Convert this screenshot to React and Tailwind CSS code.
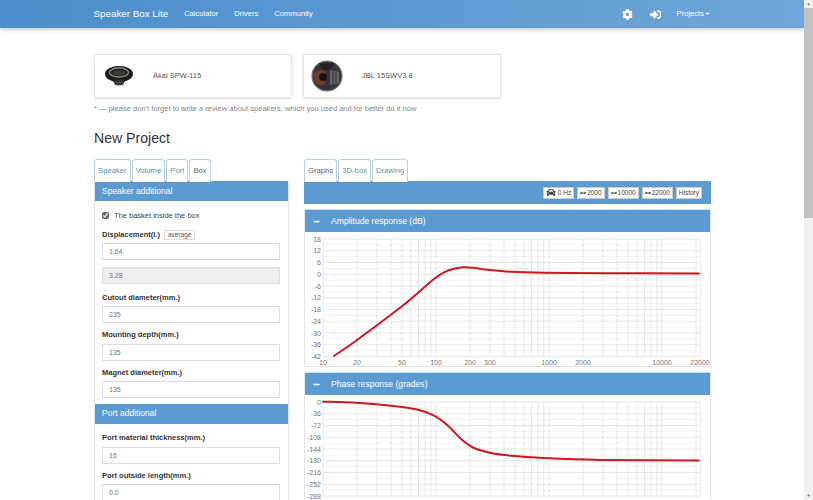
import React from 'react';
import {FaCog, FaSignInAlt, FaCar, FaArrowsAltH, FaMinus, FaCaretDown} from 'react-icons/fa';

const freqs = []
for (let d = 10; d <= 10000; d *= 10) {
    for (let m = 1; m < 10; m++) {
        if (d * m <= 22000) freqs.push(d * m)
    }
}
freqs.push(22000)

const xOf = (f) => 322 + (Math.log10(f) - 1) * 113

// catmull-rom through the picked points, good enough for a response curve
const smooth = (pts) => {
    let d = `M${pts[0][0]} ${pts[0][1]}`
    for (let i = 0; i < pts.length - 1; i++) {
        const p0 = pts[i - 1] || pts[i]
        const p1 = pts[i]
        const p2 = pts[i + 1]
        const p3 = pts[i + 2] || p2
        d += ` C${p1[0] + (p2[0] - p0[0]) / 6} ${p1[1] + (p2[1] - p0[1]) / 6} ${p2[0] - (p3[0] - p1[0]) / 6} ${p2[1] - (p3[1] - p1[1]) / 6} ${p2[0]} ${p2[1]}`
    }
    return d
}

const ampCurve = [[333, 357], [355, 341.7], [400, 308], [433, 280], [447, 271.5], [460, 268.5], [472, 268.8], [487, 270.8], [510, 272.8], [543, 273.8], [600, 274.2], [698, 274.4]]
const phaseCurve = [[322, 402.7], [355, 403.7], [390, 406.7], [417, 410.7], [433, 416.7], [447, 426.7], [460, 440], [473, 449], [490, 454], [510, 456.7], [543, 459], [600, 460.9], [698, 461.6]]

const Chart = ({top, height, first, step, count, curve, xLabels}) => {
    const rows = []
    for (let i = 0; i < count * 2 - 1; i++) rows.push(top + i * 5.875)
    return (
        <svg className="block w-[407px]" style={{height}} viewBox={`304 ${top - 7} 407 ${height}`}>
            {rows.map((y, i) => (
                <line key={y} x1="322" x2="699" y1={y} y2={y} stroke={i % 2 ? "#f2f2f2" : "#e6e6e6"} strokeWidth="1"/>
            ))}
            {freqs.map(f => (
                <line key={f} x1={xOf(f)} x2={xOf(f)} y1={top} y2={top + (count - 1) * 11.75} stroke="#e0e0e0" strokeWidth="0.8"/>
            ))}
            {Array.from({length: count}).map((_, i) => (
                <text key={i} x="320" y={top + i * 11.75 + 2.5} textAnchor="end" fontSize="7" fill="#777">{first + i * step}</text>
            ))}
            {xLabels.map(f => (
                <text key={f} x={f === 22000 ? 699 : xOf(f)} y={top + (count - 1) * 11.75 + 8.5} textAnchor="middle" fontSize="7" fill="#777">{f}</text>
            ))}
            <path d={smooth(curve)} fill="none" stroke="#d0161f" strokeWidth="2" strokeLinecap="round"/>
        </svg>
    )
}

const Tab = ({children, active}) => (
    <div className={`h-[23px] -mb-px flex items-center px-[3px] border border-[#b9d3e4] border-b-0 rounded-t-[3px] bg-white text-[7.7px] ${active ? "text-[#666]" : "text-[#5a94ac]"}`}>
        {children}
    </div>
)

const Field = ({label, value}) => (
    <div className="mb-[5.5px]">
        <div className="flex items-center h-[13px] mb-[2px] text-[7.5px] font-bold text-[#333]">
            {label}
        </div>
        <input readOnly value={value} className="block w-[178px] h-[17px] px-[6px] border border-[#ddd] text-[7px] text-[#777] outline-none"/>
    </div>
)

const Heading = ({children}) => (
    <div className="h-[20px] flex items-center px-[7px] bg-[#5b9bd1] text-white text-[8.5px]">{children}</div>
)

const ChartHeading = ({children}) => (
    <div className="h-[23px] flex items-center px-[8px] bg-[#5b9bd1] text-white text-[8.6px] border-t border-[#c9dff0]">
        <FaMinus className="w-[7px] h-[7px] mr-[11px]"/>
        {children}
    </div>
)

const Btn = ({children}) => (
    <div className="h-[12px] flex items-center gap-[1px] px-[2px] bg-white border border-[#ccc] text-[6.5px] text-[#444]">{children}</div>
)

const SpeakerOne = () => (
    <svg className="w-[30px] h-[24px]" viewBox="0 0 30 24">
        <ellipse cx="15" cy="10" rx="14" ry="8" fill="#1c1c1c"/>
        <ellipse cx="15" cy="8.5" rx="9.5" ry="4.5" fill="none" stroke="#8c8c84" strokeWidth="1.4"/>
        <ellipse cx="15" cy="9" rx="6.5" ry="2.8" fill="#3a3a38"/>
        <path d="M6 15 Q15 24 24 15 Z" fill="#222"/>
        <ellipse cx="15" cy="19" rx="5" ry="2.5" fill="#3d3d3d"/>
    </svg>
)

const SpeakerTwo = () => (
    <svg className="w-[32px] h-[32px]" viewBox="0 0 32 32">
        <circle cx="16" cy="16" r="15" fill="#34343a"/>
        <circle cx="16" cy="16" r="15" fill="none" stroke="#77777d" strokeWidth="1.2"/>
        <path d="M2 13 Q8 8 15 11 L14 24 Q8 28 3 21 Z" fill="#6e3b30"/>
        <circle cx="12" cy="17" r="4" fill="#151518"/>
        <path d="M8 3 L24 3 L18 10 L12 10 Z" fill="#222226"/>
        <path d="M19 10 L28 12 L28 23 L19 25 Z" fill="#66666b"/>
        <path d="M22 11 V24 M25 12 V23" stroke="#2b2a2d" strokeWidth="1"/>
    </svg>
)

const App = () => {
    return (
        <div className="flex h-[500px] overflow-hidden bg-white" style={{fontFamily: '"Liberation Sans", Arial, sans-serif'}}>
            <div className="w-[804px] shrink-0 overflow-hidden">
                <nav className="h-[28px] flex items-center pl-[93.5px] pr-[93px] text-white text-[7.6px] bg-gradient-to-r from-[#4a8ecb] to-[#6fa6d9] shadow-[0_2px_4px_rgba(0,0,0,0.2)]">
                    <span className="text-[9.8px] mr-[16px]">Speaker Box Lite</span>
                    <span className="mr-[16px]">Calculator</span>
                    <span className="mr-[16px]">Drivers</span>
                    <span>Community</span>
                    <FaCog className="ml-auto w-[11px] h-[11px] mr-[17px]"/>
                    <FaSignInAlt className="w-[11px] h-[11px] mr-[16px]"/>
                    <span className="flex items-center">Projects<FaCaretDown className="w-[7px] h-[7px]"/></span>
                </nav>

                <div className="pl-[94px] pt-[26px]">
                    <div className="flex gap-[11px]">
                        <div className="w-[198px] h-[44px] flex items-center pl-[9px] border border-[#e3e3e3] rounded-[2px] shadow-[0_1px_3px_rgba(0,0,0,0.12)] text-[7.5px] text-[#555]">
                            <SpeakerOne/>
                            <span className="ml-[19px]">Akai SPW-115</span>
                        </div>
                        <div className="w-[198px] h-[44px] flex items-center pl-[7px] border border-[#e3e3e3] rounded-[2px] shadow-[0_1px_3px_rgba(0,0,0,0.12)] text-[7.5px] text-[#555]">
                            <SpeakerTwo/>
                            <span className="ml-[19px]">JBL 15SWV3.8</span>
                        </div>
                    </div>
                    <p className="mt-[6px] text-[7.55px] leading-[10px] text-[#888]">* — please don't forget to write a review about speakers, which you used and for better do it now</p>
                    <h1 className="mt-[15px] text-[14.1px] leading-[18px] text-[#333]">New Project</h1>

                    <div className="mt-[12px] flex gap-[15px] text-[8px]">
                        <div className="w-[195px]">
                            <div className="flex gap-[1px] relative">
                                <Tab>Speaker</Tab>
                                <Tab>Volume</Tab>
                                <Tab>Port</Tab>
                                <Tab active>Box</Tab>
                            </div>
                            <div className="border-x border-[#e3e3e3] shadow-[0_0_3px_rgba(0,0,0,0.06)]">
                                <Heading>Speaker additional</Heading>
                                <div className="px-[7px] pt-[8px]">
                                    <div className="flex items-center h-[13px] mb-[6px] text-[7.5px] text-[#444]">
                                        <input readOnly type="checkbox" checked className="w-[7px] h-[7px] mr-[5px] accent-[#666]"/>
                                        The basket inside the box
                                    </div>
                                    <div className="flex items-center h-[13px] mb-[2px] text-[7.5px] font-bold text-[#333]">
                                        Displacement(l.)
                                        <span className="ml-[4px] px-[3px] h-[10px] flex items-center border border-[#ddd] text-[6.5px] font-normal text-[#555]">average</span>
                                    </div>
                                    <input readOnly value="1.64" className="block w-[178px] h-[17px] mb-[7px] px-[6px] border border-[#ddd] text-[7px] text-[#777] outline-none"/>
                                    <input readOnly value="3.28" className="block w-[178px] h-[17px] mb-[7px] px-[6px] border border-[#ddd] bg-[#eee] text-[7px] text-[#777] outline-none"/>
                                    <Field label="Cutout diameter(mm.)" value="235"/>
                                    <Field label="Mounting depth(mm.)" value="135"/>
                                    <Field label="Magnet diameter(mm.)" value="135"/>
                                </div>
                                <div className="mt-[3.5px]">
                                    <Heading>Port additional</Heading>
                                </div>
                                <div className="px-[7px] pt-[8px]">
                                    <Field label="Port material thickness(mm.)" value="16"/>
                                    <Field label="Port outside length(mm.)" value="0.0"/>
                                </div>
                            </div>
                        </div>

                        <div className="w-[407px]">
                            <div className="flex gap-[1px]">
                                <Tab active>Graphs</Tab>
                                <Tab>3D-box</Tab>
                                <Tab>Drawing</Tab>
                            </div>
                            <div className="h-[23px] flex items-center justify-end gap-[3px] pr-[9px] bg-[#5b9bd1]">
                                <Btn><FaCar className="w-[10px] h-[9px] mr-[1px]"/>0 Hz</Btn>
                                <Btn><FaArrowsAltH className="w-[6px] h-[6px]"/>2000</Btn>
                                <Btn><FaArrowsAltH className="w-[6px] h-[6px]"/>10000</Btn>
                                <Btn><FaArrowsAltH className="w-[6px] h-[6px]"/>22000</Btn>
                                <Btn>History</Btn>
                            </div>
                            <div className="mt-[5px] border-x border-b border-[#e3e3e3]">
                                <ChartHeading>Amplitude response (dB)</ChartHeading>
                                <Chart top={240} height={134} first={18} step={-6} count={11} curve={ampCurve}
                                       xLabels={[10, 20, 50, 100, 200, 300, 1000, 2000, 10000, 22000]}/>
                            </div>
                            <div className="mt-[5px] border-x border-[#e3e3e3]">
                                <ChartHeading>Phase response (grades)</ChartHeading>
                                <Chart top={403} height={104} first={0} step={-36} count={9} curve={phaseCurve} xLabels={[]}/>
                            </div>
                        </div>
                    </div>
                </div>
            </div>

            <div className="w-[9px] shrink-0 bg-[#f1f1f1] flex flex-col items-center">
                <div className="h-[8px] flex items-center text-[4px] text-[#555]">▲</div>
                <div className="w-full h-[210px] bg-[#c1c1c1]"></div>
                <div className="mt-auto h-[8px] flex items-center text-[4px] text-[#555]">▼</div>
            </div>
        </div>
    )
}

export default App;
